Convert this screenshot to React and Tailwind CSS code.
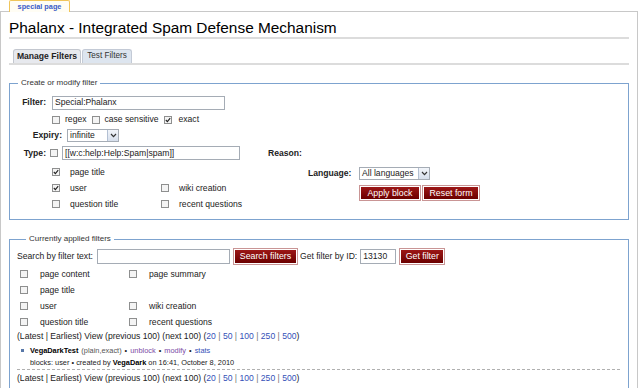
import React from 'react'

function Box({ on }) {
  return (
    <span className="w-[8px] h-[8px] border border-[#8e8f8f] bg-[#f4f4f4] flex items-center justify-center shrink-0">
      {on && (
        <svg width="6" height="6" viewBox="0 0 6 6">
          <path d="M0.8 3 L2.4 4.6 L5.2 1.2" stroke="#222" strokeWidth="1.1" fill="none" />
        </svg>
      )}
    </span>
  )
}

function Select({ className, text }) {
  return (
    <span className={`flex items-center border border-[#a5acb5] bg-white ${className}`}>
      <span className="flex-1 pl-[2px] leading-none">{text}</span>
      <span className="w-[11px] h-full border-l border-[#b3c0d3] bg-linear-to-b from-[#f2f5fa] to-[#d6dfec] flex items-center justify-center">
        <svg width="7" height="5" viewBox="0 0 7 5">
          <path d="M1 1 L3.5 3.6 L6 1" stroke="#333" strokeWidth="1.2" fill="none" />
        </svg>
      </span>
    </span>
  )
}

function Btn({ className, children }) {
  return (
    <span className={`border border-[#c99595] p-px flex ${className}`}>
      <span className="flex-1 flex items-center justify-center bg-linear-to-b from-[#9c1616] to-[#6c0000] text-white text-[8.8px] leading-none">
        {children}
      </span>
    </span>
  )
}

function Input({ className, value }) {
  return (
    <span className={`border border-[#a5acb5] bg-white flex items-center pl-[2px] leading-none ${className}`}>
      {value}
    </span>
  )
}

function Pager() {
  const nums = ['20', '50', '100', '250', '500']
  return (
    <span>
      (Latest | Earliest) View (previous 100) (next 100) (
      {nums.map((n, i) => (
        <span key={n}>
          <span className="text-[#3451b8]">{n}</span>
          {i < nums.length - 1 && <span className="text-[#777]"> | </span>}
        </span>
      ))}
      )
    </span>
  )
}

export default function App() {
  return (
    <div className="w-[640px] h-[388px] overflow-hidden bg-white text-[#222] text-[8.6px] font-['Liberation_Sans',Arial,sans-serif]">
      <div className="flex">
        <div className="ml-[9px] w-[61px] h-[12px] relative z-10 -mb-px border border-b-0 border-[#f0c55a] rounded-t-[2px] bg-[#fffdf4] flex items-center justify-center text-[7.3px] font-bold text-[#3a5bc7] leading-none">
          special page
        </div>
      </div>
      <div className="w-[638px] h-[390px] border-t border-l border-r border-[#c8c8c8] px-[8px]">
        <h1 className="pt-[6px] leading-[19px] text-[15.4px] text-black border-b-2 border-[#dcdcdc]">
          Phalanx - Integrated Spam Defense Mechanism
        </h1>

        <div className="mt-[10px] flex border-b-2 border-[#dcdcdc]">
          <div className="ml-[4px] w-[68px] h-[14px] flex items-center justify-center border border-b-0 border-[#c3c7cf] rounded-t-[3px] bg-[#e7e9ee] font-bold text-[#222]">
            Manage Filters
          </div>
          <div className="ml-[1px] w-[50px] h-[14px] flex items-center justify-center border border-b-0 border-[#c3cad6] rounded-t-[3px] bg-[#dde5ef] text-[8.2px] text-[#333]">
            Test Filters
          </div>
        </div>

        <fieldset className="mt-[12px] w-[620px] border border-[#7da3cf] pb-[7px]">
          <legend className="ml-[8px] px-[3px] text-[8px] leading-[12px] text-[#333]">Create or modify filter</legend>

          <div className="mt-[5px] h-[17px] flex items-center">
            <span className="w-[36px] text-right font-bold">Filter:</span>
            <Input className="ml-[6px] w-[173px] h-[14px]" value="Special:Phalanx" />
          </div>

          <div className="h-[17px] flex items-center pl-[42px]">
            <Box />
            <span className="ml-[5px]">regex</span>
            <span className="ml-[5px]"><Box /></span>
            <span className="ml-[5px]">case sensitive</span>
            <span className="ml-[6px]"><Box on /></span>
            <span className="ml-[6px]">exact</span>
          </div>

          <div className="h-[14px] flex items-center">
            <span className="w-[52px] text-right font-bold">Expiry:</span>
            <Select className="ml-[5px] w-[52px] h-[13px]" text="infinite" />
          </div>

          <div className="h-[22px] flex items-center">
            <span className="w-[36px] text-right font-bold">Type:</span>
            <span className="ml-[4px]"><Box /></span>
            <Input className="ml-[4px] w-[178px] h-[14px]" value="[[w:c:help:Help:Spam|spam]]" />
            <span className="ml-[28px] font-bold">Reason:</span>
          </div>

          <div className="flex">
            <div className="w-[298px] flex flex-col">
              <div className="h-[16px] flex items-center pl-[42px]">
                <span className="w-[109px] flex items-center"><Box on /><span className="ml-[10px]">page title</span></span>
              </div>
              <div className="h-[16px] flex items-center pl-[42px]">
                <span className="w-[109px] flex items-center"><Box on /><span className="ml-[10px]">user</span></span>
                <Box /><span className="ml-[10px]">wiki creation</span>
              </div>
              <div className="h-[16px] flex items-center pl-[42px]">
                <span className="w-[109px] flex items-center"><Box /><span className="ml-[10px]">question title</span></span>
                <Box /><span className="ml-[10px]">recent questions</span>
              </div>
            </div>
            <div className="flex flex-col">
              <div className="h-[18px] flex items-center">
                <span className="w-[51px] font-bold">Language:</span>
                <Select className="w-[71px] h-[13px]" text="All languages" />
              </div>
              <div className="mt-[3px] pl-[51px] flex gap-[1px]">
                <Btn className="w-[62px] h-[16px]">Apply block</Btn>
                <Btn className="w-[58px] h-[16px]">Reset form</Btn>
              </div>
            </div>
          </div>
        </fieldset>

        <fieldset className="mt-[13px] w-[620px] border border-[#7da3cf] pl-[7px] h-[170px]">
          <legend className="ml-[9px] px-[3px] text-[8px] leading-[12px] text-[#333]">Currently applied filters</legend>

          <div className="mt-[2px] h-[19px] flex items-center">
            <span>Search by filter text:</span>
            <Input className="ml-[4px] w-[133px] h-[15px]" value="" />
            <Btn className="ml-[3px] w-[65px] h-[17px]">Search filters</Btn>
            <span className="ml-[2px]">Get filter by ID:</span>
            <Input className="ml-[3px] w-[36px] h-[15px]" value="13130" />
            <Btn className="ml-[3px] w-[46px] h-[17px]">Get filter</Btn>
          </div>

          <div className="h-[16px] flex items-center pl-[3px]">
            <span className="w-[109px] flex items-center"><Box /><span className="ml-[12px]">page content</span></span>
            <Box /><span className="ml-[12px]">page summary</span>
          </div>
          <div className="h-[16px] flex items-center pl-[3px]">
            <span className="w-[109px] flex items-center"><Box /><span className="ml-[12px]">page title</span></span>
          </div>
          <div className="h-[16px] flex items-center pl-[3px]">
            <span className="w-[109px] flex items-center"><Box /><span className="ml-[12px]">user</span></span>
            <Box /><span className="ml-[12px]">wiki creation</span>
          </div>
          <div className="h-[16px] flex items-center pl-[3px]">
            <span className="w-[109px] flex items-center"><Box /><span className="ml-[12px]">question title</span></span>
            <Box /><span className="ml-[12px]">recent questions</span>
          </div>

          <div className="h-[13px] flex items-center"><Pager /></div>

          <ul className="mt-[1px] text-[7.4px]">
            <li className="h-[13px] flex items-center">
              <span className="ml-[4px] w-[3px] h-[3px] bg-[#5878a8]" />
              <span className="ml-[6px] font-bold text-black">VegaDarkTest</span>
              <span className="ml-[3px] text-[#555]">(plain,exact)</span>
              <span className="ml-[3px]">•</span>
              <span className="ml-[3px] text-[#7b4aa6]">unblock</span>
              <span className="ml-[3px]">•</span>
              <span className="ml-[3px] text-[#7b4aa6]">modify</span>
              <span className="ml-[3px]">•</span>
              <span className="ml-[3px] text-[#3451b8]">stats</span>
            </li>
            <li className="h-[12px] flex items-center pl-[13px]">
              blocks: user • created by <span className="ml-[2px] mr-[2px] font-bold text-black">VegaDark</span> on 16:41, October 8, 2010
            </li>
          </ul>
          <div className="w-[603px] border-t border-dashed border-[#b0b0b0]" />
          <div className="h-[16px] flex items-center"><Pager /></div>
        </fieldset>
      </div>
    </div>
  )
}
